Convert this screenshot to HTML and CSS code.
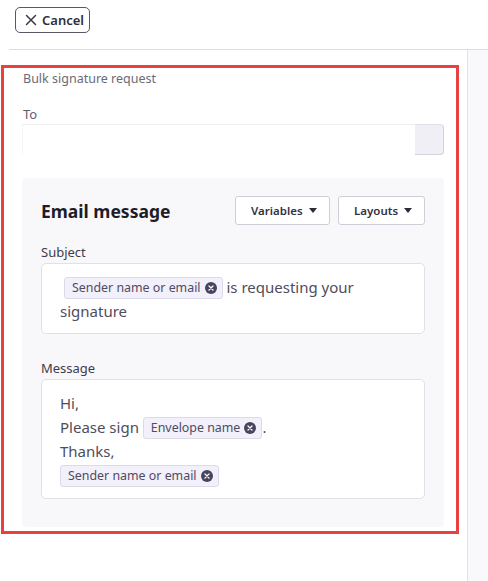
FILE: index.html
```html
<!DOCTYPE html>
<html lang="en">
<head>
<meta charset="utf-8">
<title>Bulk signature request</title>
<link rel="stylesheet" href="styles.css">
</head>
<body>
<header class="topbar">
  <button class="cancel-btn" type="button">
    <svg class="cancel-icon" width="12" height="12" viewBox="0 0 12 12" aria-hidden="true"><path d="M1.5 1.5 L10.5 10.5 M10.5 1.5 L1.5 10.5" stroke="#3a3948" stroke-width="1.5" stroke-linecap="round" fill="none"/></svg>
    <span>Cancel</span>
  </button>
</header>
<div class="workspace">
  <main class="main">
    <p class="section-title">Bulk signature request</p>
    <label class="field-label to-label">To</label>
    <div class="to-field">
      <div class="to-input"></div>
      <div class="to-addon"></div>
    </div>
    <section class="email-card">
      <div class="card-head">
        <h2 class="card-title">Email message</h2>
        <div class="card-actions">
          <button class="drop-btn variables" type="button"><span>Variables</span><span class="caret"></span></button>
          <button class="drop-btn layouts" type="button"><span>Layouts</span><span class="caret"></span></button>
        </div>
      </div>
      <div class="field-label subject-label">Subject</div>
      <div class="editor subject-editor"><span class="chip lead-chip"><span>Sender name or email</span><span class="chip-x"><svg width="12" height="12" viewBox="0 0 12 12"><circle cx="6" cy="6" r="6" fill="#47445e"/><path d="M4 4 L8 8 M8 4 L4 8" stroke="#fff" stroke-width="1.3" stroke-linecap="round"/></svg></span></span> <span>is requesting your</span> <span>signature</span></div>
      <div class="field-label message-label">Message</div>
      <div class="editor message-editor">
        <div>Hi,</div>
        <div><span>Please sign</span> <span class="chip"><span>Envelope name</span><span class="chip-x"><svg width="12" height="12" viewBox="0 0 12 12"><circle cx="6" cy="6" r="6" fill="#47445e"/><path d="M4 4 L8 8 M8 4 L4 8" stroke="#fff" stroke-width="1.3" stroke-linecap="round"/></svg></span></span><span>.</span></div>
        <div>Thanks,</div>
        <div><span class="chip"><span>Sender name or email</span><span class="chip-x"><svg width="12" height="12" viewBox="0 0 12 12"><circle cx="6" cy="6" r="6" fill="#47445e"/><path d="M4 4 L8 8 M8 4 L4 8" stroke="#fff" stroke-width="1.3" stroke-linecap="round"/></svg></span></span></div>
      </div>
    </section>
  </main>
  <aside class="sidebar"></aside>
</div>
<div class="highlight-box" aria-hidden="true"></div>
</body>
</html>
```
FILE: styles.css
```css
* { box-sizing: border-box; }
html, body { margin: 0; padding: 0; background: #fff; }
body {
  font-family: "Noto Sans", "Open Sans", sans-serif;
  color: #3b3a46;
  width: 488px;
  height: 581px;
  overflow: hidden;
  position: relative;
}
.topbar {
  height: 49px;
  padding: 7px 15px 0;
}
.cancel-btn {
  display: inline-flex;
  align-items: center;
  gap: 5px;
  height: 26px;
  width: 75px;
  padding: 0 0 0 9px;
  border: 1px solid #5a5868;
  border-radius: 5px;
  background: #fff;
  font-family: inherit;
  font-size: 13px;
  font-weight: 600;
  color: #2f2e3a;
}
.cancel-icon { flex: none; }
.workspace {
  margin-left: 9px;
  border-top: 1px solid #dcdce2;
  display: flex;
  height: 532px;
}
.main {
  flex: 1;
  padding: 20px 23px 0 13px;
}
.sidebar {
  width: 21px;
  border-left: 1px solid #e2e2e8;
  background: #f9f9fc;
}
.section-title {
  margin: 0;
  font-size: 12.5px;
  line-height: 18px;
  color: #6c6a76;
  padding-left: 1px;
}
.field-label {
  display: block;
  font-size: 13px;
  line-height: 20px;
  color: #3d3c4a;
}
.to-label {
  margin-top: 16px;
  color: #5f5d6a;
  padding-left: 1px;
}
.to-field {
  display: flex;
  height: 31px;
}
.to-input {
  flex: 1;
  border-top: 1px solid #efeff2;
  border-left: 1px solid #f6f6f8;
}
.to-addon {
  width: 29px;
  background: #f0eff5;
  border: 1px solid #d3d2de;
  border-left: none;
  border-top-color: #e0dfe8;
  border-radius: 0 4px 4px 0;
}
.email-card {
  margin-top: 23px;
  background: #f8f8fb;
  border-radius: 4px;
  padding: 18px 19px 28px;
}
.card-head {
  display: flex;
  align-items: center;
  justify-content: space-between;
  height: 29px;
}
.card-title {
  margin: 0;
  font-size: 17.5px;
  font-weight: 700;
  color: #1d1c28;
}
.card-actions {
  display: flex;
  gap: 8px;
}
.drop-btn {
  height: 29px;
  display: inline-flex;
  align-items: center;
  justify-content: space-between;
  padding: 0 12px 0 15px;
  background: #fff;
  border: 1px solid #cfced8;
  border-radius: 3px;
  font-family: inherit;
  font-size: 11.5px;
  font-weight: 600;
  color: #33323f;
}
.drop-btn.variables { width: 95px; }
.drop-btn.layouts { width: 87px; }
.caret {
  width: 0;
  height: 0;
  border-left: 4px solid transparent;
  border-right: 4px solid transparent;
  border-top: 5px solid #2c2b38;
}
.subject-label { margin-top: 17px; margin-bottom: 1px; }
.message-label { margin-top: 24px; margin-bottom: 1px; }
.editor {
  background: #fff;
  border: 1px solid #e1e0e7;
  border-radius: 5px;
  padding: 11px 18px 10px;
  font-size: 15px;
  line-height: 24px;
  color: #4f4d5c;
}
.message-editor { padding-top: 11px; padding-bottom: 11px; }
.chip {
  display: inline-flex;
  align-items: center;
  gap: 4px;
  height: 22px;
  padding: 0 5px 0 7px;
  background: #f2f0fa;
  border: 1px solid #dcd9ea;
  border-radius: 3px;
  font-size: 12.4px;
  line-height: 20px;
  color: #4e4b65;
  vertical-align: 1px;
}
.lead-chip { margin-left: 4px; }
.chip-x { display: inline-flex; }
.highlight-box {
  position: absolute;
  left: 1px;
  top: 65px;
  width: 458px;
  height: 469px;
  border: 3px solid #e8413f;
  pointer-events: none;
}
```
